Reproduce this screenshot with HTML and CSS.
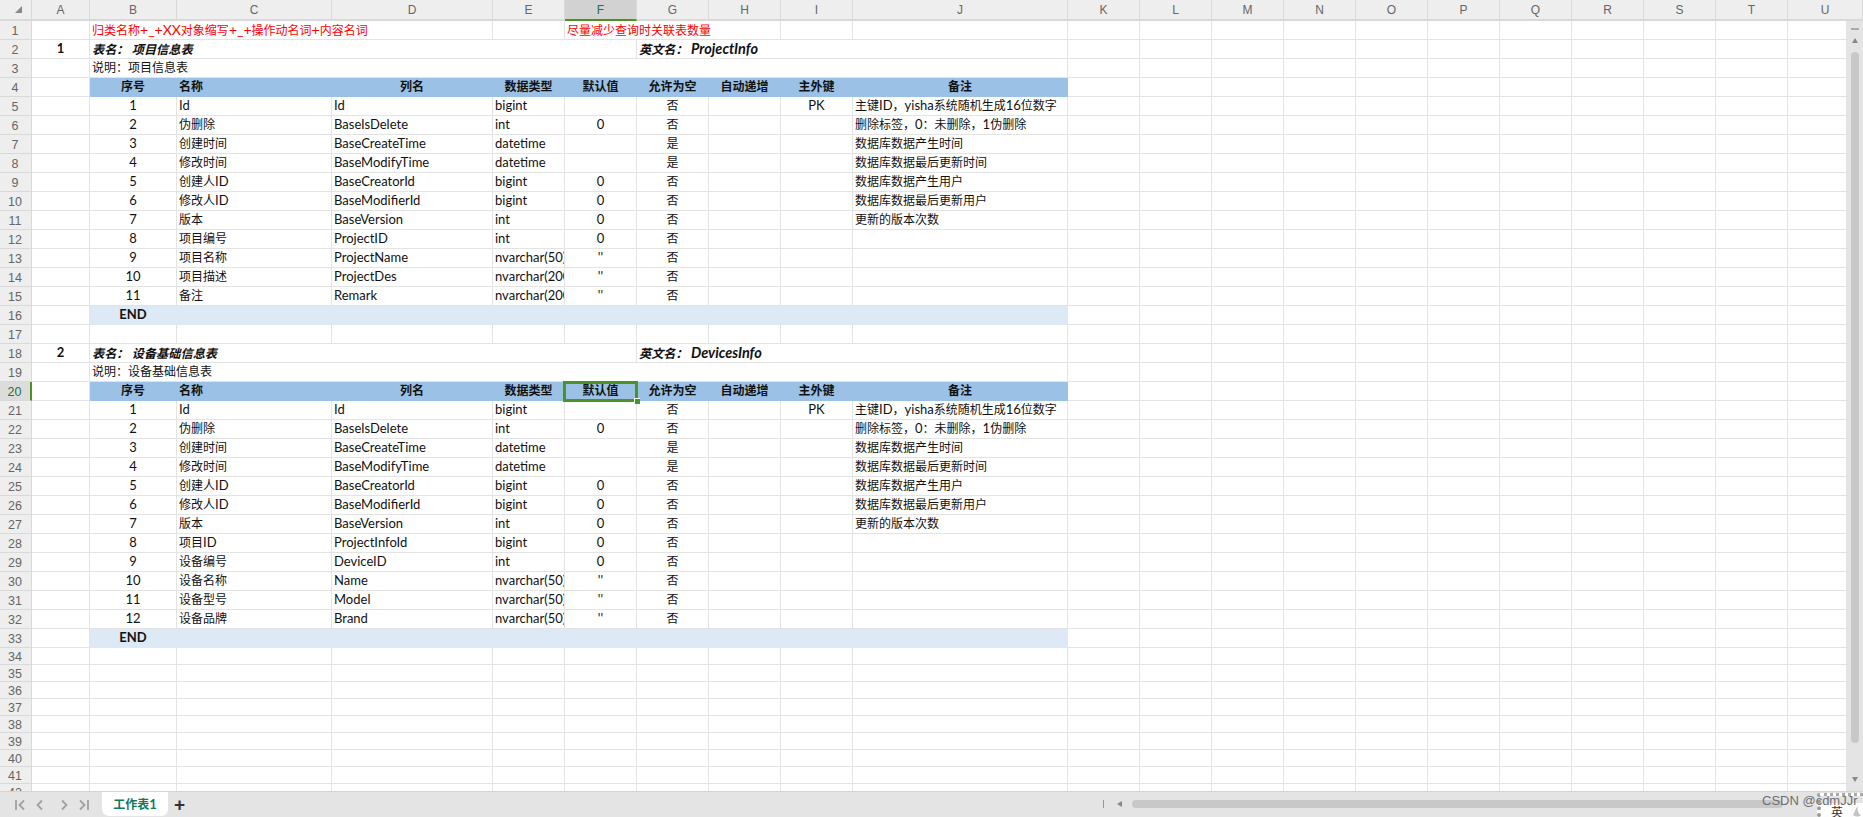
FILE: index.html
```html
<!DOCTYPE html>
<html lang="zh-CN">
<head>
    <meta charset="UTF-8">
    <title>工作表1</title>
    <link rel="stylesheet" href="styles.css">
</head>
<body>
    <div class="sheet-area">
        <table class="sheet" id="sheet"></table>
        <div class="vscroll">
            <span class="split-h"></span>
            <span class="arrow up"></span>
            <span class="thumb"></span>
            <span class="arrow down"></span>
        </div>
    </div>
    <div class="bottom-bar">
        <div class="tab-nav">
            <svg width="12" height="12" viewBox="0 0 12 12"><path d="M2 1v10M10 1.500 5.500 6l4.500 4.500" /></svg>
            <svg width="12" height="12" viewBox="0 0 12 12"><path d="M8 1.500 3.500 6 8 10.500" /></svg>
            <svg width="12" height="12" viewBox="0 0 12 12"><path d="M4 1.500 8.500 6 4 10.500" /></svg>
            <svg width="12" height="12" viewBox="0 0 12 12"><path d="M10 1v10M2 1.500 6.500 6 2 10.500" /></svg>
        </div>
        <div class="tab"><span class="zh">工作表</span>1</div>
        <div class="add-tab">+</div>
        <div class="hscroll">
            <span class="split-v"></span>
            <span class="arrow left"></span>
            <span class="hthumb"></span>
        </div>
        <div class="ime">
            <span class="zh">英</span>
            <svg class="moon" width="9" height="11" viewBox="0 0 9 11"><path d="M6 0C3 3 3 6 1 9c3 2 6 2 8 0C6 8 5 4 6 0z" /></svg>
        </div>
        <div class="watermark">CSDN @cdmJJr</div>
    </div>
    <script src="sheet.js"></script>
</body>
</html>
```

FILE: styles.css
```css
html, body {
    margin: 0;
    height: 100%;
    overflow: hidden;
    background: #fff;
}
body {
    width: 1863px;
    height: 817px;
    display: flex;
    flex-direction: column;
    font-family: Lato, "Noto Sans CJK SC", sans-serif;
    font-size: 13px;
    color: #111;
}
.zh {
    font-family: "Noto Sans CJK SC", sans-serif;
    font-size: 12px;
    line-height: 12px;
}
.sheet-area {
    height: 791px;
    position: relative;
    overflow: hidden;
    flex: none;
}
.sheet {
    border-collapse: separate;
    border-spacing: 0;
    table-layout: fixed;
    width: 1863px;
}
.sheet td, .sheet th {
    padding: 0 2px 1px;
    border-right: 1px solid #e3e3e3;
    border-bottom: 1px solid #e3e3e3;
    box-sizing: border-box;
    height: 19px;
    line-height: 17px;
    font-weight: normal;
    white-space: nowrap;
    overflow: hidden;
    text-align: left;
}
.sheet tr.short td, .sheet tr.short th {
    height: 17px;
    padding-bottom: 0;
    line-height: 16px;
}
.sheet th.col {
    height: 21px;
    padding: 0 2px;
    background: #eeeeee;
    border-right: 1px solid #d9d9d9;
    border-bottom: 2px solid #d9d9d9;
    text-align: center;
    color: #666;
    font: 12px "Liberation Sans", sans-serif;
}
.sheet th.col.on {
    background: #d2d2d2;
    border-bottom: 2px solid #4a9423;
    color: #217346;
}
.sheet th.row {
    padding: 2px 1px 0 0;
    background: #eeeeee;
    border-right: 1px solid #d9d9d9;
    border-bottom: 1px solid #d9d9d9;
    text-align: center;
    color: #666;
    font: 12.500px/16px "Liberation Sans", sans-serif;
}
.sheet tr.short th.row {
    padding-top: 3px;
    line-height: 13px;
}
.sheet th.row.on {
    background: #dcdcdc;
    border-right: 2px solid #4a9423;
    color: #217346;
}
.corner-mark {
    display: block;
    width: 0;
    height: 0;
    margin: 0 0 1px 13px;
    border-left: 7px solid transparent;
    border-bottom: 7px solid #8a8a8a;
}
.sheet .center { text-align: center; }
.sheet .bold { font-weight: 700; }
.sheet .red {
    color: #ff0000;
    font-size: 14px;
}
.sheet .title {
    font-size: 14.500px;
    font-weight: 700;
    font-style: italic;
}
.sheet .title .zh { font-size: 12.200px; }
.sheet td.head-cell {
    background: #9bc2e6;
    border-right-color: #9bc2e6;
    border-bottom-color: #9bc2e6;
    font-weight: 700;
}
.sheet td.end-cell {
    background: #dde9f5;
    border-right-color: #dde9f5;
    border-bottom-color: #dde9f5;
    font-weight: 700;
}
.sheet td.selected {
    position: relative;
    overflow: visible;
    z-index: 2;
}
.selected::before {
    content: "";
    position: absolute;
    left: -2px;
    right: -2px;
    top: -1px;
    bottom: -2px;
    border: 3px solid #4a9423;
}
.selected::after {
    content: "";
    position: absolute;
    right: -4px;
    bottom: -4px;
    width: 5px;
    height: 5px;
    background: #4a9423;
    border-left: 1px solid #fff;
    border-top: 1px solid #fff;
}
.vscroll {
    position: absolute;
    top: 21px;
    right: 0;
    bottom: 0;
    width: 17px;
    background: #e4e4e4;
    z-index: 3;
}
.split-h {
    position: absolute;
    top: 7px;
    left: 5px;
    width: 8px;
    height: 2px;
    background: #aaa;
}
.arrow {
    position: absolute;
    width: 0;
    height: 0;
    border: 3px solid transparent;
}
.arrow.up {
    top: 17px;
    left: 6px;
    border-top: 0;
    border-bottom: 5px solid #888;
}
.arrow.down {
    bottom: 9px;
    left: 6px;
    border-bottom: 0;
    border-top: 5px solid #888;
}
.thumb {
    position: absolute;
    top: 31px;
    left: 5px;
    width: 8px;
    height: 691px;
    border-radius: 4px;
    background: #c8c8c8;
}
.bottom-bar {
    flex: 1;
    position: relative;
    display: flex;
    background: #e4e4e4;
    border-top: 1px solid #d4d4d4;
    box-sizing: border-box;
}
.tab-nav {
    width: 102px;
    padding-left: 14px;
    box-sizing: border-box;
    display: flex;
    align-items: center;
    gap: 8px;
}
.tab-nav svg {
    fill: none;
    stroke: #a0a0a0;
    stroke-width: 1.800;
}
.tab-nav svg:nth-child(2) { margin-right: 4px; }
.tab {
    width: 66px;
    height: 24px;
    line-height: 24px;
    text-align: center;
    background: #fff;
    border-radius: 0 0 7px 7px;
    color: #0f7b5a;
    font-weight: 700;
}
.add-tab {
    margin-left: 6px;
    font: 700 19px/25px "Liberation Sans", sans-serif;
    color: #333;
}
.hscroll {
    position: absolute;
    left: 1096px;
    right: 0;
    top: 0;
    bottom: 0;
}
.split-v {
    position: absolute;
    left: 7px;
    top: 8px;
    width: 1px;
    height: 8px;
    background: #999;
}
.arrow.left {
    top: 9px;
    left: 21px;
    border-left: 0;
    border-right: 5px solid #888;
}
.hthumb {
    position: absolute;
    left: 36px;
    top: 8px;
    width: 651px;
    height: 8px;
    border-radius: 4px;
    background: #c8c8c8;
}
.ime {
    position: absolute;
    right: 0;
    top: 1px;
    bottom: 0;
    width: 46px;
    padding: 10px 0 0 10px;
    box-sizing: border-box;
    display: flex;
    gap: 9px;
    background: linear-gradient(transparent 7px, #fff 7px);
    border-left: 4px dotted #999;
    border-top: 3px dotted #aaa;
    line-height: 12px;
    color: #333;
    overflow: hidden;
}
.moon { fill: #c4c4c4; flex: none; }
.watermark {
    position: absolute;
    left: 1762px;
    top: 1px;
    font: 13px/16px "Liberation Sans", sans-serif;
    color: #6e6e6e;
}
```

FILE: sheet.js
```js
// column widths, first one is the row header
const widths = [32, 58, 87, 155, 161, 72, 72, 72, 72, 72, 215, 72, 72, 72, 72, 72, 72, 72, 72, 72, 72, 75];
const letters = ['', 'A', 'B', 'C', 'D', 'E', 'F', 'G', 'H', 'I', 'J', 'K', 'L', 'M', 'N', 'O', 'P', 'Q', 'R', 'S', 'T', 'U'];
const headers = ['序号', '名称', '列名', '数据类型', '默认值', '允许为空', '自动递增', '主外键', '备注'];

const baseRows = [
    ['1', 'Id', 'Id', 'bigint', '', '否', '', 'PK', '主键ID，yisha系统随机生成16位数字'],
    ['2', '伪删除', 'BaseIsDelete', 'int', '0', '否', '', '', '删除标签，0：未删除，1伪删除'],
    ['3', '创建时间', 'BaseCreateTime', 'datetime', '', '是', '', '', '数据库数据产生时间'],
    ['4', '修改时间', 'BaseModifyTime', 'datetime', '', '是', '', '', '数据库数据最后更新时间'],
    ['5', '创建人ID', 'BaseCreatorId', 'bigint', '0', '否', '', '', '数据库数据产生用户'],
    ['6', '修改人ID', 'BaseModifierId', 'bigint', '0', '否', '', '', '数据库数据最后更新用户'],
    ['7', '版本', 'BaseVersion', 'int', '0', '否', '', '', '更新的版本次数']
];
const table1 = baseRows.concat([
    ['8', '项目编号', 'ProjectID', 'int', '0', '否', '', '', ''],
    ['9', '项目名称', 'ProjectName', 'nvarchar(50)', "''", '否', '', '', ''],
    ['10', '项目描述', 'ProjectDes', 'nvarchar(200)', "''", '否', '', '', ''],
    ['11', '备注', 'Remark', 'nvarchar(200)', "''", '否', '', '', '']
]);
const table2 = baseRows.concat([
    ['8', '项目ID', 'ProjectInfoId', 'bigint', '0', '否', '', '', ''],
    ['9', '设备编号', 'DeviceID', 'int', '0', '否', '', '', ''],
    ['10', '设备名称', 'Name', 'nvarchar(50)', "''", '否', '', '', ''],
    ['11', '设备型号', 'Model', 'nvarchar(50)', "''", '否', '', '', ''],
    ['12', '设备品牌', 'Brand', 'nvarchar(50)', "''", '否', '', '', '']
]);

// chinese runs are a bit smaller than the latin text
function zh(text) {
    return text.replace(/[\u3000-\u9fff\uff00-\uffef]+/g, '<span class="zh">$&</span>');
}

function empty(n) {
    return '<td></td>'.repeat(n);
}

let html = '<colgroup>' + widths.map(w => `<col style="width:${w}px">`).join('') + '</colgroup>';

html += '<tr>' + letters.map((l, i) => {
    if (i === 0) return '<th class="col"><span class="corner-mark"></span></th>';
    return `<th class="col${l === 'F' ? ' on' : ''}">${l}</th>`;
}).join('') + '</tr>';

let rowNo = 0;

function addRow(cells, opts) {
    opts = opts || {};
    rowNo++;
    const cls = opts.short ? ' class="short"' : '';
    const headCls = 'row' + (opts.active ? ' on' : '');
    html += `<tr${cls}><th class="${headCls}">${rowNo}</th>${cells}</tr>`;
}

function addTable(no, title, english, note, rows) {
    addRow(`<td class="center bold">${no}</td><td class="title" colspan="5">${zh('表名：')} ${zh(title)}</td><td class="title" colspan="4">${zh('英文名：')} ${english}</td>` + empty(11));
    addRow(`<td></td><td colspan="9">${zh('说明：' + note)}</td>` + empty(11));
    const active = no === 2;
    const head = headers.map((h, i) => {
        const c = ['head-cell'];
        if (i !== 1) c.push('center');
        if (active && i === 4) c.push('selected');
        return `<td class="${c.join(' ')}">${zh(h)}</td>`;
    }).join('');
    addRow('<td></td>' + head + empty(11), { active: active });
    rows.forEach(r => {
        const cells = r.map((v, i) => {
            const center = [0, 4, 5, 6, 7].includes(i);
            return `<td${center ? ' class="center"' : ''}>${zh(v)}</td>`;
        }).join('');
        addRow('<td></td>' + cells + empty(11));
    });
    addRow('<td></td><td class="end-cell center">END</td>' + '<td class="end-cell"></td>'.repeat(8) + empty(11));
}

addRow(`<td></td><td class="red" colspan="3">${zh('归类名称+_+XX对象缩写+_+操作动名词+内容名词')}</td><td></td><td class="red" colspan="3">${zh('尽量减少查询时关联表数量')}</td>` + empty(13));
addTable(1, '项目信息表', 'ProjectInfo', '项目信息表', table1);
addRow(empty(21));
addTable(2, '设备基础信息表', 'DevicesInfo', '设备基础信息表', table2);
while (rowNo < 42) {
    addRow(empty(21), { short: true });
}

document.getElementById('sheet').innerHTML = html;
```
